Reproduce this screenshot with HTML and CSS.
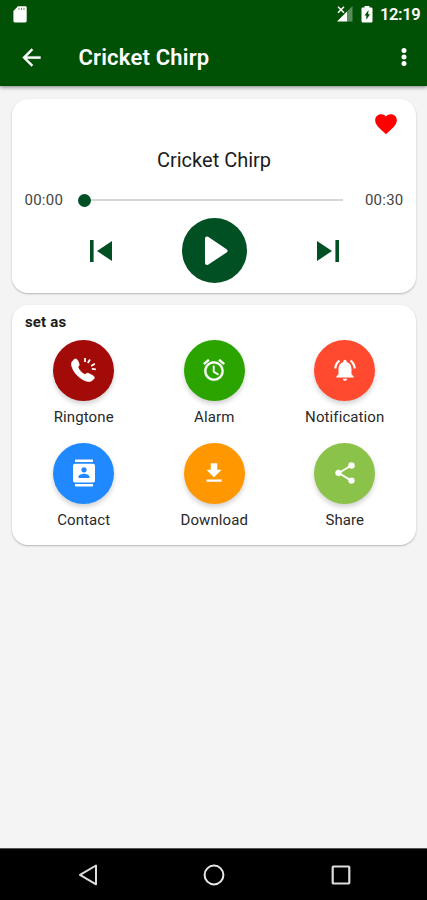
FILE: index.html
```html
<!DOCTYPE html>
<html lang="en">
<head>
<meta charset="utf-8">
<title>Cricket Chirp</title>
<link rel="stylesheet" href="styles.css">
</head>
<body>
<div class="screen">
  <header class="top">
    <div class="status">
      <svg class="sd" width="14" height="17" viewBox="0 0 14 17"><path fill="#fff" d="M5 .3h7.3q1.4 0 1.4 1.4v13.4q0 1.4-1.4 1.4H1.8q-1.4 0-1.4-1.4V5z"/><path stroke="#005005" stroke-opacity=".6" stroke-width="1" d="M6 1.8v2.200M8.500 1.800v2.200M11 1.800v2.200"/></svg>
      <svg class="signal" width="16" height="16" viewBox="0 0 16 16"><path fill="#fff" fill-opacity=".35" d="M15.500 0v15.500H10V5.500z"/><path fill="#fff" d="M10 5.500v10H0z"/><path stroke="#fff" stroke-width="1.500" d="M1 .8l6 6M7 .8l-6 6"/></svg>
      <svg class="battery" width="12" height="17" viewBox="0 0 12 17"><path fill="#fff" d="M3.500 0h5v1.500h1.800q1.200 0 1.200 1.200v12.600q0 1.200-1.200 1.200H1.700Q.5 16.500.5 15.300V2.700q0-1.200 1.200-1.200h1.800z"/><path fill="#005005" d="M7.500 4L3.500 9.500h1.800v4.200L9 8.200H7.200z"/></svg>
      <span class="clock">12:19</span>
    </div>
    <div class="appbar">
      <svg class="back" width="27" height="27" viewBox="0 0 24 24"><path fill="#fff" d="M20 11H7.830l5.590-5.590L12 4l-8 8 8 8 1.410-1.410L7.830 13H20z" stroke="#fff" stroke-width=".3"/></svg>
      <h1>Cricket Chirp</h1>
      <svg class="more" width="6" height="22" viewBox="0 0 6 22"><g fill="#fff"><circle cx="3" cy="4.400" r="2.500"/><circle cx="3" cy="11" r="2.500"/><circle cx="3" cy="17.600" r="2.500"/></g></svg>
    </div>
  </header>
  <main>
    <section class="card player">
      <svg class="heart" width="26" height="26" viewBox="0 0 24 24"><path fill="#f00" d="M12 21.350l-1.450-1.320C5.400 15.360 2 12.280 2 8.500 2 5.420 4.420 3 7.500 3c1.740 0 3.410.810 4.500 2.090C13.090 3.810 14.760 3 16.500 3 19.580 3 22 5.420 22 8.500c0 3.780-3.400 6.860-8.550 11.540z"/></svg>
      <h2>Cricket Chirp</h2>
      <div class="seek">
        <span>00:00</span>
        <div class="track"><i class="thumb"></i><i class="line"></i></div>
        <span>00:30</span>
      </div>
      <div class="controls">
        <svg width="22" height="22" viewBox="0 0 22 22"><path fill="#005023" d="M0 0h3.600v22H0zM22 1v20L7 11z"/></svg>
        <div class="play"><svg width="65" height="65" viewBox="0 0 65 65"><path fill="#fff" stroke="#fff" stroke-width="4" stroke-linejoin="round" d="M25 20.500v24.500l18.500-12.200z"/></svg></div>
        <svg width="22" height="22" viewBox="0 0 22 22"><path fill="#005023" d="M22 0h-3.600v22H22zM0 1v20L15 11z"/></svg>
      </div>
    </section>
    <section class="card actions">
      <h3>set as</h3>
      <div class="grid">
        <div class="item"><div class="disc red"><svg width="27" height="27" viewBox="0 0 27 27"><path fill="#fff" stroke="#fff" stroke-width=".8" stroke-linejoin="round" d="M4 2.700C5 1.600 6.800 1.900 7.600 3.400l1.300 3c.5 1.300.2 2.300-1.200 3.600 1.500 3.300 3.900 6 7.300 7.700 1.500-1.400 2.600-1.700 3.800-1.100l4.500 2.400c1.400.9 1.400 2-.1 3.500-2.300 2.400-5.600 2.600-10 .2C8 20 3.800 15.500 1.900 9.500 1 6.500 1.800 4.300 4 2.700z"/><path fill="none" stroke="#fff" stroke-width="1.800" d="M15 1v4M20 2.600l-2.200 3.300M24.800 6.700l-3.600 2.200M21.800 11.800l4 .6"/></svg></div><span>Ringtone</span></div>
        <div class="item"><div class="disc green"><svg width="26" height="26" viewBox="0 0 24 24"><path fill="#fff" stroke="#fff" stroke-width=".25" d="M22 5.720l-4.600-3.860-1.290 1.530 4.600 3.860zM7.880 3.390L6.600 1.860 2 5.710l1.290 1.530zM12.500 8H11v6l4.750 2.850.750-1.230-4-2.370zM12 4c-4.970 0-9 4.030-9 9s4.020 9 9 9a9 9 0 000-18zm0 16c-3.870 0-7-3.130-7-7s3.130-7 7-7 7 3.130 7 7-3.130 7-7 7z"/></svg></div><span>Alarm</span></div>
        <div class="item"><div class="disc coral"><svg width="26" height="26" viewBox="0 0 24 24"><path fill="#fff" d="M7.580 4.080L6.150 2.650C3.750 4.480 2.170 7.300 2.030 10.500h2c.150-2.650 1.510-4.970 3.550-6.420zm12.390 6.420h2c-.150-3.200-1.730-6.020-4.120-7.850l-1.420 1.430c2.020 1.450 3.390 3.770 3.540 6.420zM18 11c0-3.070-1.640-5.640-4.500-6.320V4c0-.830-.670-1.500-1.500-1.500s-1.500.670-1.500 1.500v.680C7.630 5.360 6 7.920 6 11v5l-2 2v1h16v-1l-2-2zm-6 11c.140 0 .270-.010.400-.040.650-.140 1.180-.580 1.440-1.180.100-.240.150-.500.150-.780h-4c.010 1.100.900 2 2.010 2z"/></svg></div><span>Notification</span></div>
        <div class="item"><div class="disc blue"><svg width="24" height="28" viewBox="0 0 24 28"><path fill="#fff" fill-rule="evenodd" d="M3 .5h18v2.600H3zM3 25.100h18v2.400H3zM3 4.800h18q2 0 2 2v14.600q0 2-2 2H3q-2 0-2-2V6.800q0-2 2-2zM12 8.200a2.600 2.600 0 100 5.200 2.600 2.600 0 000-5.200zM6.500 19h11v-1.200c0-1.900-3.500-3-5.500-3s-5.500 1.100-5.500 3z"/></svg></div><span>Contact</span></div>
        <div class="item"><div class="disc orange"><svg width="26" height="26" viewBox="0 0 24 24"><path fill="#fff" d="M19 9h-4V3H9v6H5l7 7zM5 18v2h14v-2z"/></svg></div><span>Download</span></div>
        <div class="item"><div class="disc lime"><svg width="26" height="26" viewBox="0 0 24 24"><path fill="#fff" d="M18 16.080c-.760 0-1.440.300-1.960.770L8.910 12.700c.050-.230.090-.460.090-.700s-.040-.470-.090-.700l7.050-4.110c.540.500 1.250.810 2.040.810a3 3 0 10-3-3c0 .240.040.470.090.700L8.040 9.810A3 3 0 106 15c.790 0 1.500-.310 2.040-.810l7.120 4.160c-.050.210-.080.430-.080.650a2.920 2.920 0 102.920-2.920z"/></svg></div><span>Share</span></div>
      </div>
    </section>
  </main>
  <footer>
    <svg width="22" height="24" viewBox="0 0 22 24"><path fill="none" stroke="#ddd" stroke-width="2" stroke-linejoin="round" d="M19 2.500v18.800L3 11.900z"/></svg>
    <svg width="22" height="24" viewBox="0 0 22 24"><circle cx="11" cy="12" r="9.400" fill="none" stroke="#e8e8e8" stroke-width="2"/></svg>
    <svg width="22" height="24" viewBox="0 0 22 24"><rect x="2.700" y="3.500" width="16.600" height="17" rx=".7" fill="none" stroke="#ddd" stroke-width="2.200"/></svg>
  </footer>
</div>
</body>
</html>
```
FILE: styles.css
```css
* { box-sizing: border-box; }
body { margin: 0; font-family: Roboto, "Liberation Sans", sans-serif; color: #1c1c1c; }
svg { display: block; flex: none; }
h1, h2, h3 { margin: 0; }
.screen { width: 427px; height: 900px; display: flex; flex-direction: column; background: #f4f4f4; }
.top { height: 86px; background: #005005; color: #fff; box-shadow: 0 1px 4px rgba(0,0,0,.5); }
.status { height: 28px; display: flex; align-items: center; padding: 0 8px 0 13px; }
.signal { margin-left: auto; margin-right: 8px; }
.battery { margin-right: 7px; }
.clock { font-size: 16.500px; font-weight: 600; line-height: 28px; width: 39px; padding-top: 1px; letter-spacing: -.4px; white-space: nowrap; }
.appbar { height: 58px; display: flex; align-items: center; padding: 0 20px 0 17.500px; }
.appbar h1 { margin-left: 34px; font-size: 22px; font-weight: 600; line-height: 26px; padding-top: 2px; letter-spacing: .2px; }
.more { margin-left: auto; }
main { flex: 1; padding: 12.500px 11px 0 12px; display: flex; flex-direction: column; gap: 12px; }
.card { background: #fff; border-radius: 16px; box-shadow: 0 1px 2px rgba(0,0,0,.26); }
.player { height: 194px; display: flex; flex-direction: column; }
.heart { align-self: flex-end; margin: 12px 17px 0 0; }
.player h2 { margin-top: 10.500px; text-align: center; font-size: 20px; font-weight: 400; line-height: 26px; }
.seek { display: flex; align-items: center; height: 20px; margin-top: 17px; padding: 0 12.500px 0 12.500px; font-size: 15px; letter-spacing: .25px; color: #444; }
.track { flex: 1; display: flex; align-items: center; margin: 0 21.500px 0 15px; }
.thumb { width: 13px; height: 13px; border-radius: 50%; background: #005023; }
.line { flex: 1; height: 2px; background: #d6d6d6; }
.controls { display: flex; align-items: center; justify-content: space-between; padding: 0 77px 0 78px; margin-top: 8px; }
.play { width: 65px; height: 65px; border-radius: 50%; background: #005023; }
.actions { height: 240px; }
.actions h3 { font-size: 15px; font-weight: 700; line-height: 20px; padding: 7px 0 0 13px; letter-spacing: .15px; }
.grid { display: grid; grid-template-columns: repeat(3, 130.500px); grid-auto-rows: 103.300px; margin: 8px 0 0 6.500px; }
.item { display: flex; flex-direction: column; align-items: center; font-size: 15px; line-height: 20px; color: #292929; }
.item span { margin-top: 6px; letter-spacing: .1px; }
.disc { width: 61px; height: 61px; border-radius: 50%; display: flex; align-items: center; justify-content: center; box-shadow: 0 3px 5px rgba(0,0,0,.18); }
.red { background: #a30b08; }
.green { background: #2ca400; }
.coral { background: #ff4a30; }
.blue { background: #2189ff; }
.orange { background: #ff9800; }
.lime { background: #8bc34a; }
footer { height: 52px; border-top: 1px solid #555; background: #000; display: flex; align-items: center; justify-content: space-between; padding: 0 75.500px 0 76.500px; }
```
